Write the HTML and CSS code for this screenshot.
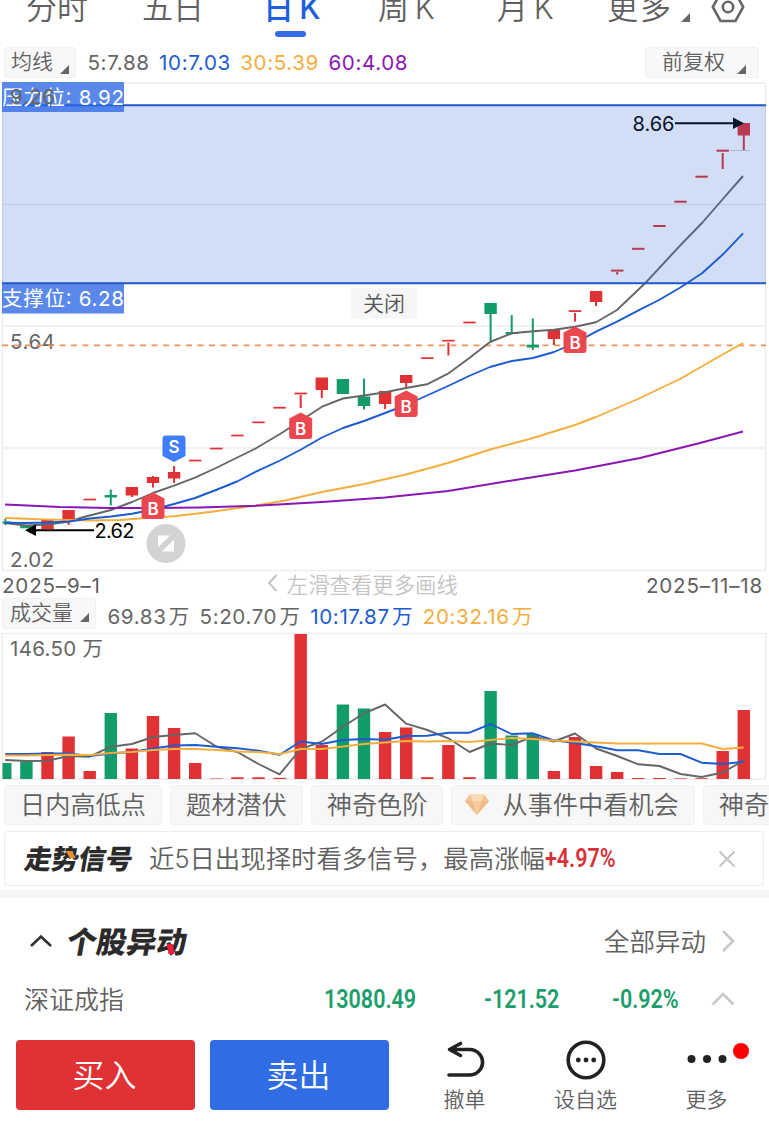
FILE: index.html
```
<!DOCTYPE html>
<html lang="zh-CN">

<head>
    <meta charset="UTF-8">
    <meta name="viewport" content="width=device-width, initial-scale=1.0">
    <title>日K</title>

    <link rel="stylesheet" href="styles.css">
</head>

<body>

    <nav class="tabs">
        <span>分时</span>
        <span>五日</span>
        <span class="active">日 K</span>
        <span>周 K</span>
        <span>月 K</span>
        <span class="more">更多<i class="corner"></i></span>
        <svg class="gear" width="34" height="34" viewBox="0 0 34 34">
            <path d="M9.500 3H24.500L32.200 17L24.500 31H9.500L1.800 17Z" />
            <circle cx="17" cy="17" r="5.200" />
        </svg>
    </nav>

    <div class="averages">
        <div class="pill">均线<i class="corner"></i></div>
        <span class="ma5">5:7.88</span>
        <span class="ma10">10:7.03</span>
        <span class="ma30">30:5.39</span>
        <span class="ma60">60:4.08</span>
        <div class="pill right">前复权<i class="corner"></i></div>
    </div>

    <svg class="chart" id="kline" width="769" height="490" viewBox="0 82 769 490">
        <g class="grid">
            <path d="M2.500 83H765.500V570.500H2.500ZM2 204.500H766M2 326H766M2 448H766" />
        </g>
        <text class="axis" x="10" y="349" textLength="45">5.64</text>
        <text class="axis" x="10" y="567" textLength="44">2.02</text>
        <path class="cost" d="M2 345.300H766" />

        <g id="candles"></g>
        <g id="lines"></g>
        <path class="gap" d="M730 150.500H750" />

        <g class="arrow">
            <path d="M34 530.300H94" />
            <polygon points="25,530.300 36,524.500 36,536" />
            <text x="94.500" y="538" textLength="40">2.62</text>
            <path d="M675 123.200H736" />
            <polygon points="744,123.200 733,117.500 733,129" />
            <text x="632.500" y="131" textLength="42">8.66</text>
        </g>

        <g id="marks"></g>

        <rect class="band" x="2" y="105" width="764" height="178" />
        <path class="limit" d="M2 105.300H766M2 283.200H766" />
        <rect class="tag" x="2" y="82" width="122" height="30" />
        <rect class="tag" x="2" y="284" width="122" height="29.500" />
        <text class="tagText" x="2" y="105" textLength="122">压力位: 8.92</text>
        <text class="tagText" x="2" y="306" textLength="122">支撑位: 6.28</text>
        <text class="axis" x="10" y="104" textLength="45">9.26</text>

        <rect class="close" x="351" y="288" width="66" height="30.500" rx="3" />
        <text class="closeText" x="363" y="311" textLength="42">关闭</text>

        <g class="expand">
            <circle cx="166" cy="543.500" r="19.500" />
            <path d="M158 535.500H170L158 547.500ZM174 539.500V551.500H162Z" />
        </g>
    </svg>

    <div class="dates">
        <span>2025–9–1</span>
        <span class="hint">
            <svg width="11" height="18" viewBox="0 0 11 18"><path d="M9.500 1L2 9L9.500 17" /></svg>
            左滑查看更多画线
        </span>
        <span>2025–11–18</span>
    </div>

    <div class="volumes">
        <div class="pill">成交量<i class="corner"></i></div>
        <span class="ma5">69.83 万</span>
        <span class="ma5">5:20.70 万</span>
        <span class="ma10">10:17.87 万</span>
        <span class="ma30">20:32.16 万</span>
    </div>

    <svg class="chart" id="volume" width="769" height="149" viewBox="0 632 769 149">
        <g class="grid">
            <path d="M2.500 633.500H765.500V779.300H2.500Z" />
        </g>
        <text class="axis" x="10" y="655.500" textLength="93">146.50 万</text>
        <g id="bars"></g>
        <g id="volumeLines"></g>
    </svg>

    <div class="chips">
        <span>日内高低点</span>
        <span>题材潜伏</span>
        <span>神奇色阶</span>
        <span class="gem">
            <svg width="24" height="21" viewBox="0 0 24 21">
                <path fill="#f3c393" d="M5 0H19L24 7L12 21L0 7Z" />
                <path fill="#fbdcb8" d="M5 0H19L16.500 7H7.500Z" />
                <path fill="#eebb88" d="M0 7H7.500L12 21ZM24 7H16.500L12 21Z" />
                <path fill="#f7cd9f" d="M7.500 7H16.500L12 21Z" />
            </svg>
            从事件中看机会
        </span>
        <span>神奇色阶</span>
    </div>

    <div class="signal">
        <strong class="brand">走势信号</strong>
        <span class="message">近5日出现择时看多信号，最高涨幅</span>
        <b class="din up">+4.97%</b>
        <svg class="cross" width="18" height="18" viewBox="0 0 18 18"><path d="M1.500 1.500L16.500 16.500M16.500 1.500L1.500 16.500" /></svg>
    </div>

    <section class="moves">
        <div class="title">
            <svg width="24" height="14" viewBox="0 0 24 14"><path d="M2 12L12 2.500L22 12" /></svg>
            <strong class="brand red">个股异动</strong>
            <span class="all">全部异动</span>
            <svg class="light" width="14" height="24" viewBox="0 0 14 24"><path d="M2 2L12 12L2 22" /></svg>
        </div>
        <div class="index">
            <span class="name">深证成指</span>
            <b class="din">13080.49</b>
            <b class="din">-121.52</b>
            <b class="din">-0.92%</b>
            <svg class="light" width="24" height="14" viewBox="0 0 24 14"><path d="M1.500 12.500L12 2L22.500 12.500" /></svg>
        </div>
    </section>

    <footer>
        <button class="buy">买入</button>
        <button class="sell">卖出</button>
        <div class="action">
            <svg width="40" height="40" viewBox="0 0 40 40"><path d="M4 35H24.500A13 12.700 0 0 0 24.500 9.500H4.500M15.500 3.500L4.500 9.500L15.500 15.500" /></svg>
            撤单
        </div>
        <div class="action">
            <svg width="40" height="40" viewBox="0 0 40 40">
                <circle cx="20" cy="20" r="17.800" />
                <g class="dots"><circle cx="12.300" cy="20" r="2.400" /><circle cx="20" cy="20" r="2.400" /><circle cx="27.700" cy="20" r="2.400" /></g>
            </svg>
            设自选
        </div>
        <div class="action">
            <svg width="40" height="40" viewBox="0 0 40 40">
                <g class="dots"><circle cx="4.500" cy="19" r="4" /><circle cx="20" cy="19" r="4" /><circle cx="35.500" cy="19" r="4" /></g>
            </svg>
            更多
            <i class="badge"></i>
        </div>
    </footer>

    <script src="chart.js"></script>

</body>

</html>
```
FILE: styles.css
```
* {
    margin: 0;
    padding: 0;
    box-sizing: border-box;
}

body {
    width: 769px;
    height: 1139px;
    overflow: hidden;
    background-color: white;
    color: #606060;
    font-family: Inter, "Noto Sans CJK SC", sans-serif;
    font-weight: 350;
    font-size: 20px;
}

svg {
    display: block;
    flex: none;
}

.tabs {
    height: 44px;
    padding-left: 26px;
    display: grid;
    grid-template-columns: 116px 121px 115px 119px 110px 104px auto;
    font-size: 31px;
    line-height: 44px;
    word-spacing: -3px;
    white-space: nowrap;
}

.tabs span {
    position: relative;
    top: -14px;
}

.tabs .active {
    color: #1c5fe0;
    font-weight: 500;
}

.tabs .active::after {
    content: "";
    position: absolute;
    left: 12px;
    top: 45px;
    width: 31px;
    height: 6px;
    border-radius: 3px;
    background-color: #346de3;
}

.tabs .more {
    letter-spacing: 2px;
}

.corner {
    display: inline-block;
    width: 9px;
    height: 9px;
    margin-left: 8px;
    background-color: #666;
    clip-path: polygon(100% 0, 100% 100%, 0 100%);
}

.tabs .corner {
    margin-bottom: -3px;
}

.gear {
    margin-top: -10px;
    fill: none;
    stroke: #666;
    stroke-width: 2.6;
}

.averages,
.volumes {
    display: flex;
    align-items: center;
    font-size: 20.6px;
    font-weight: 400;
    letter-spacing: .6px;
    white-space: nowrap;
}

.averages {
    height: 38px;
    padding: 0 10px 1px 4px;
    gap: 9.5px;
}

.pill {
    height: 31px;
    padding: 0 6px;
    border: 1px solid #f1f1f1;
    border-radius: 3px;
    background-color: #f8f8f8;
    font-size: 21px;
    font-weight: 350;
    line-height: 28px;
    letter-spacing: 0;
    margin-right: 2px;
}

.pill .corner {
    margin-left: 7px;
    margin-bottom: -5px;
}

.averages .right {
    margin-left: auto;
    margin-right: 0;
    padding: 0 12px 0 16px;
}

.right .corner {
    margin-left: 12px;
}

.ma5 {
    color: #666;
}

.ma10 {
    color: #1c5bd0;
}

.ma30 {
    color: #f3ae3d;
}

.ma60 {
    color: #8a16b3;
}

.grid path {
    fill: none;
    stroke: #ededed;
    stroke-width: 1.4;
}

.axis {
    fill: #666;
    font-size: 20.5px;
    font-weight: 400;
}

.cost {
    stroke: #f0935a;
    stroke-width: 1.8;
    stroke-dasharray: 6 5.5;
}

.line {
    fill: none;
    stroke-width: 1.9;
    stroke-linejoin: round;
}

.gap {
    stroke: #ccc;
}

.arrow {
    font-size: 20px;
    font-weight: 400;
}

.arrow path {
    stroke: black;
    stroke-width: 2;
}

.mark {
    fill: white;
    font-size: 17px;
    font-weight: 600;
    text-anchor: middle;
}

.band {
    fill: #1c58cf;
    opacity: .2;
}

.limit {
    stroke: #1e57c8;
    stroke-width: 2;
}

.tag {
    fill: #2865e5;
    opacity: .77;
}

.tagText {
    fill: white;
    font-size: 20.5px;
    font-weight: 400;
}

.close {
    fill: #f6f6f6;
}

.closeText {
    fill: #555;
    font-size: 21px;
}

.expand circle {
    fill: #d3d3d3;
}

.expand path {
    fill: white;
}

.dates {
    height: 25px;
    padding: 2px 6px 0 2px;
    display: flex;
    justify-content: space-between;
    align-items: center;
    font-size: 20.6px;
    font-weight: 400;
    letter-spacing: .8px;
}

.hint {
    height: 22px;
    padding-bottom: 5px;
    display: flex;
    align-items: center;
    gap: 9px;
    margin-right: 22px;
    color: #c4c4c4;
    font-size: 21.4px;
    font-weight: 350;
    letter-spacing: 0;
}

.hint path {
    fill: none;
    stroke: #c4c4c4;
    stroke-width: 2;
}

.volumes {
    height: 35px;
    padding: 0 0 2px 2px;
    gap: 9.5px;
    word-spacing: -4px;
}

.volumes .pill {
    padding: 0 6px 0 7px;
}

.volumes .corner {
    margin-bottom: -2px;
}

.volumes span {
    padding-top: 3px;
}

.chips {
    height: 50px;
    padding: 4px 0 0 4px;
    display: flex;
    gap: 8px;
    overflow: hidden;
}

.chips span {
    flex: none;
    height: 40px;
    padding: 0 15px;
    border: 1px solid #f1f1f1;
    border-radius: 4px;
    background-color: #f7f7f7;
    font-size: 25.2px;
    line-height: 39px;
}

.chips .gem {
    display: flex;
    gap: 13px;
    padding-left: 13px;
}

.gem svg {
    margin-top: 8px;
}

.signal {
    height: 55px;
    margin: 0 5px 4px 4px;
    padding: 0 27px 0 20px;
    border: 1px solid #ececec;
    border-radius: 4px;
    display: flex;
    align-items: center;
    font-size: 25.4px;
    white-space: nowrap;
}

.message,
.all,
.name {
    padding-bottom: 3px;
}

.brand {
    position: relative;
    padding-bottom: 3px;
    color: #2b2b2b;
    font-size: 27px;
    font-weight: 900;
    transform: skewX(-10deg);
}

.signal .brand {
    margin-right: 16px;
}

.brand::after {
    content: "";
    position: absolute;
    left: 42px;
    top: 13px;
    width: 6px;
    height: 7px;
    background-color: #ed8d2d;
    transform: skewX(38deg);
}

.din {
    color: #1b9d6c;
    font-family: Roboto, sans-serif;
    font-size: 25px;
    font-weight: 600;
    display: inline-block;
    transform: scaleX(.86);
    transform-origin: left;
}

.up {
    color: #d8323a;
}

.cross {
    margin-left: auto;
    fill: none;
    stroke: #c4c4c4;
    stroke-width: 2;
}

.moves {
    height: 150px;
    border-top: 8px solid #f5f5f5;
    padding: 13px 32px 0 24px;
}

.title {
    height: 60px;
    padding-left: 5px;
    display: flex;
    align-items: center;
    font-size: 25.500px;
}

.title svg,
.index svg {
    fill: none;
    stroke: #333;
    stroke-width: 2.6;
}

.title .light,
.index .light {
    stroke: #c8c8c8;
}

.title .light {
    margin-right: 2px;
}

.title .brand {
    margin-left: 14px;
    font-size: 30px;
}

.red::after {
    left: 102px;
    top: 26px;
    height: 10px;
    background-color: #f01c3c;
    transform: skewX(20deg);
}

.all {
    margin-left: auto;
    margin-right: 15px;
}

.index {
    height: 56px;
    display: grid;
    grid-template-columns: 300px 160px 128px 99px auto;
    align-items: center;
    font-size: 25px;
}

footer {
    height: 99px;
    padding-left: 16px;
    display: flex;
    align-items: flex-start;
}

button {
    width: 179px;
    height: 70px;
    margin-right: 15px;
    padding-right: 2px;
    border: none;
    border-radius: 4px;
    color: white;
    font: inherit;
    font-size: 32px;
    line-height: 72px;
}

.buy {
    background-color: #e03134;
}

.sell {
    background-color: #306de5;
}

.action {
    position: relative;
    width: 121px;
    display: flex;
    flex-direction: column;
    align-items: center;
    gap: 6px;
    font-size: 21px;
    line-height: 28px;
}

.action svg {
    fill: none;
    stroke: #222;
    stroke-width: 3.6;
    stroke-linecap: round;
    stroke-linejoin: round;
}

.action .dots {
    fill: #222;
    stroke: none;
}

.badge {
    position: absolute;
    left: 87px;
    top: 3px;
    width: 16px;
    height: 16px;
    border-radius: 50%;
    background-color: #f00;
}
```
FILE: chart.js
```
const RED = '#e03134'
const GREEN = '#129c69'
const STEP = 21.1
const START = 5.3

//x position of each day
const px = i => START + STEP * i

//[color, body top, body bottom, wick top, wick bottom]
const candles = [
    ['g', 521.5, 523.5, 519, 525], ['g', 525, 528.3, 525, 528], ['r', 520, 529, 520, 529],
    ['r', 510, 521, 510, 525], ['r', 498.7, 500.4, 499, 500], ['g', 495, 497.5, 489.5, 505.5],
    ['r', 487, 495.5, 487, 497], ['r', 477, 483, 476, 487.5], ['r', 472, 478.5, 466, 483],
    ['r', 459.7, 461.4, 460, 461], ['r', 447.7, 449.4, 448, 449], ['r', 434.7, 436.4, 435, 436],
    ['r', 421.5, 423.2, 422, 423], ['r', 406.8, 408.6, 407, 408], ['r', 392.6, 394.4, 395, 408],
    ['r', 377.5, 390, 378, 398], ['g', 379, 394, 380, 394], ['g', 396.5, 406, 378.5, 409.5],
    ['r', 391, 404, 391, 409], ['r', 375, 383, 375, 387], ['r', 357.3, 359, 358, 359],
    ['r', 339.8, 341.5, 342.5, 355.5], ['r', 321.6, 323.4, 322, 323], ['g', 303, 314, 303, 341],
    ['g', 332, 334, 315, 333], ['g', 344.7, 347.5, 318.5, 350], ['r', 330, 339, 330, 345],
    ['r', 310.2, 312, 313, 321.5], ['r', 291, 302, 291, 306], ['r', 269.6, 271.6, 272, 274.5],
    ['r', 247.8, 249.8, 248, 249], ['r', 225, 227, 226, 227], ['r', 200.7, 202.7, 201, 202],
    ['r', 175.7, 177.7, 176, 177], ['r', 149.7, 151.7, 153, 169], ['r', 123, 135.5, 123, 150]
]

const averages = {
    '#666666': '5,523 26,525.5 48,524.5 69,521.6 82,517.5 111,510 132,502 153,493 174,485.7 195,477.7 216,468 256,448.3 280,434 301,420.5 322,406.7 343,398.5 364,395.5 385,392.3 406,388 427,384.3 448,373.7 469,358.3 490,342 512,333.3 533,331.3 554,329.7 575,326.7 596,322.3 617,310 645,283.3 680,245.7 702,223 722,200 743,176',
    '#f3ae3d': '5,518 47,519.5 90,520.5 120,520 153,517.5 174,516.3 210,512 256,505.5 285,500.5 322,492 364,484 406,474.5 448,463 490,449.5 533,438 575,425 596,417 638,399 680,379 713,360 743,343',
    '#1c5bd0': '5,522.7 26,523 48,522.5 69,521.5 90,518.5 111,516.5 132,513.7 153,509.5 174,504 195,498 216,490 237,481.5 256,471.7 280,460.5 301,449.5 322,437.5 343,428 364,421 385,413 406,405 427,395.5 448,386 469,376 490,367 512,361 533,358 554,352 575,343 596,331.7 617,321.7 638,310.7 659,300 680,287.7 702,273.3 723,254.3 743,233.3',
    '#8a16b3': '5,504.5 60,507 110,508 153,508 200,507.5 256,505.8 322,502 385,497.5 448,491 512,480.5 575,470.5 640,458 700,443 743,431.5'
}

//[color, top]
const bars = [
    ['g', 763], ['g', 761.5], ['r', 752], ['r', 736.5], ['r', 771], ['g', 713],
    ['r', 748.5], ['r', 716], ['r', 728], ['r', 763], ['r', 778.5], ['r', 777.3],
    ['r', 777.3], ['r', 777.8], ['r', 634], ['r', 745], ['g', 704.5], ['g', 708.5],
    ['r', 732], ['r', 727.5], ['r', 777.2], ['r', 745], ['r', 777.2], ['g', 691],
    ['g', 735.5], ['g', 734], ['r', 771], ['r', 737], ['r', 766], ['r', 772],
    ['r', 778], ['r', 778], ['r', 778.4], ['r', 778.2], ['r', 751], ['r', 710]
]

const volumeAverages = {
    '#666666': [760, 761, 760.7, 756, 756.7, 746.7, 744, 737, 735, 733.3, 746.5, 752, 764, 774.3, 749, 741.7, 726.7, 713.3, 704.5, 723.7, 730, 738.3, 752, 743.5, 745, 736.5, 741.5, 733.5, 748.5, 756, 764.3, 766, 774, 777, 772.5, 760.5],
    '#1c5bd0': [754, 754, 753.5, 753.5, 756, 753.5, 752, 748.5, 745.5, 745, 746.7, 748.3, 750.7, 754.7, 741.5, 744, 740, 739, 739.7, 736, 735.7, 732.7, 732.7, 724, 734, 733.3, 740.3, 743, 746.3, 750.3, 750.3, 754, 754, 762.7, 764, 761.7],
    '#f3ae3d': [755.5, 755.5, 755, 754.7, 755, 753, 752, 750, 749, 749, 750, 751.5, 752, 754, 749, 749, 746.5, 744, 742.5, 741, 741.5, 741, 742, 740, 738, 739, 740.5, 741.5, 742.5, 743.5, 743.5, 743.5, 743.5, 743.5, 749, 747.5]
}

//[letter, x, tip y]
const marks = [
    ['B', 153, 492.5], ['S', 174, 462], ['B', 300.7, 412.5], ['B', 406.2, 390.5], ['B', 575, 326.5]
]

const color = c => c === 'r' ? RED : GREEN

document.querySelector('#candles').innerHTML = candles.map(([c, top, bottom, high, low], i) => {
    const left = Math.max(px(i) - 6.2, 2.5)
    return `<rect x="${left}" y="${top}" width="${px(i) + 6.2 - left}" height="${bottom - top}" fill="${color(c)}" />
        <rect x="${px(i) - 1}" y="${high}" width="2" height="${low - high}" fill="${color(c)}" />`
}).join('')

document.querySelector('#lines').innerHTML = Object.entries(averages).map(([stroke, points]) =>
    `<polyline class="line" points="${points}" stroke="${stroke}" />`).join('')

document.querySelector('#marks').innerHTML = marks.map(([letter, x, y]) => {
    const sell = letter === 'S'
    const d = sell ? -1 : 1
    //sell marks point down, buy marks point up
    const shape = `M0 0L11.500 ${6 * d}V${23 * d}Q11.500 ${26.500 * d} 8.500 ${26.500 * d}H-8.500Q-11.500 ${26.500 * d} -11.500 ${23 * d}V${6 * d}Z`
    return `<g transform="translate(${x} ${y})">
        <path d="${shape}" fill="${sell ? '#3f7dfa' : '#ea474e'}" />
        <text class="mark" x="0" y="${sell ? -9.5 : 22.5}">${letter}</text>
    </g>`
}).join('')

document.querySelector('#bars').innerHTML = bars.map(([c, top], i) => {
    const left = Math.max(px(i) - 6.2, 2.5)
    return `<rect x="${left}" y="${top}" width="${px(i) + 6.2 - left}" height="${779 - top}" fill="${color(c)}" />`
}).join('')

document.querySelector('#volumeLines').innerHTML = Object.entries(volumeAverages).map(([stroke, values]) =>
    `<polyline class="line" points="${values.map((y, i) => `${px(i)},${y}`).join(' ')}" stroke="${stroke}" />`).join('')
```
